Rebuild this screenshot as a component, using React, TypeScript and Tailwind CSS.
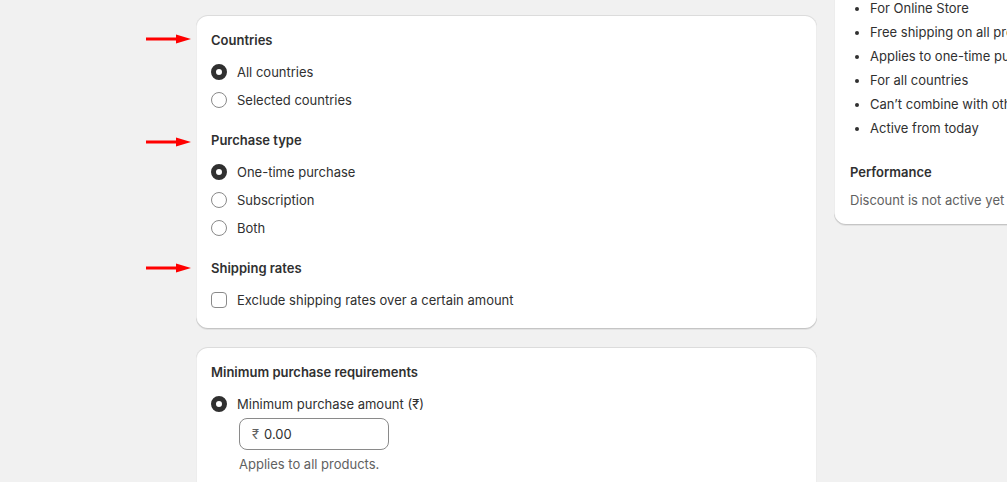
import type { ReactNode } from "react";

const FONT = { fontFamily: "Inter, 'Noto Sans', sans-serif" };

function Card({ children, className = "" }: { children: ReactNode; className?: string }) {
  return (
    <div
      className={`rounded-xl bg-white shadow-[0_1px_0_0_rgba(26,26,26,0.07),0_1px_0_0_rgba(204,204,204,0.5)_inset,0_-1px_0_0_rgba(0,0,0,0.17)_inset,0_0_0_1px_rgba(0,0,0,0.07)_inset] ${className}`}
    >
      {children}
    </div>
  );
}

function Radio({ label, checked = false }: { label: string; checked?: boolean }) {
  return (
    <label className="flex h-6 items-center gap-[10px]">
      {checked ? (
        <span className="size-4 shrink-0 rounded-full border-[5px] border-[#303030] bg-white" />
      ) : (
        <span className="size-4 shrink-0 rounded-full border border-[#8a8a8a] bg-white" />
      )}
      <span>{label}</span>
    </label>
  );
}

function Checkbox({ label }: { label: string }) {
  return (
    <label className="flex h-6 items-center gap-[10px]">
      <span className="size-4 shrink-0 rounded-[4px] border border-[#8a8a8a] bg-white" />
      <span>{label}</span>
    </label>
  );
}

function Arrow({ top }: { top: number }) {
  return (
    <svg
      className="absolute left-[146px]"
      style={{ top }}
      width="46"
      height="10"
      viewBox="0 0 46 10"
      aria-hidden="true"
    >
      <path d="M0 5 H32" stroke="#ff0000" strokeWidth="3" strokeLinecap="round" />
      <path d="M30 0.5 L45 5 L30 9.5 Z" fill="#ff0000" />
    </svg>
  );
}

const SUMMARY = [
  "For Online Store",
  "Free shipping on all products",
  "Applies to one-time purchases",
  "For all countries",
  "Can’t combine with other discounts",
  "Active from today",
];

export default function App() {
  return (
    <div
      className="relative h-[482px] w-[1007px] overflow-hidden bg-[#f1f1f1] text-[13px] leading-5 text-[#303030]"
      style={FONT}
    >
      <Arrow top={34} />
      <Arrow top={137} />
      <Arrow top={263} />

      <div className="flex w-max gap-[17px] pl-[196px]">
        <div className="flex w-[621px] shrink-0 flex-col gap-[18px] pt-[15px]">
          <Card className="px-[15px] pb-[17px] pt-[15px]">
            <h3 className="font-semibold">Countries</h3>
            <div className="mt-[10px] flex flex-col gap-1">
              <Radio label="All countries" checked />
              <Radio label="Selected countries" />
            </div>

            <h3 className="mt-[18px] font-semibold">Purchase type</h3>
            <div className="mt-[10px] flex flex-col gap-1">
              <Radio label="One-time purchase" checked />
              <Radio label="Subscription" />
              <Radio label="Both" />
            </div>

            <h3 className="mt-[18px] font-semibold">Shipping rates</h3>
            <div className="mt-[10px]">
              <Checkbox label="Exclude shipping rates over a certain amount" />
            </div>
          </Card>

          <Card className="px-[15px] pb-4 pt-[15px]">
            <h3 className="font-semibold">Minimum purchase requirements</h3>
            <div className="mt-[10px] flex flex-col">
              <Radio label="Minimum purchase amount (₹)" checked />
              <div className="mb-1 mt-[2px] pl-7">
                <div className="flex h-8 w-[150px] items-center gap-[5px] rounded-lg border border-[#8a8a8a] px-3">
                  <span className="text-[#616161]">₹</span>
                  <span>0.00</span>
                </div>
                <p className="mt-1 text-[#616161]">Applies to all products.</p>
              </div>
              <Radio label="Minimum quantity of items" />
            </div>
          </Card>
        </div>

        <div className="w-[300px] shrink-0">
          <Card className="-mt-[2px] rounded-t-none px-4 pb-[15px] pt-0">
            <ul className="flex flex-col gap-1 pl-5">
              {SUMMARY.map((item) => (
                <li key={item} className="list-disc whitespace-nowrap leading-5 marker:text-[#303030]">
                  {item}
                </li>
              ))}
            </ul>
            <h3 className="mt-6 font-semibold">Performance</h3>
            <p className="mt-2 text-[#616161]">Discount is not active yet</p>
          </Card>
        </div>
      </div>
    </div>
  );
}
